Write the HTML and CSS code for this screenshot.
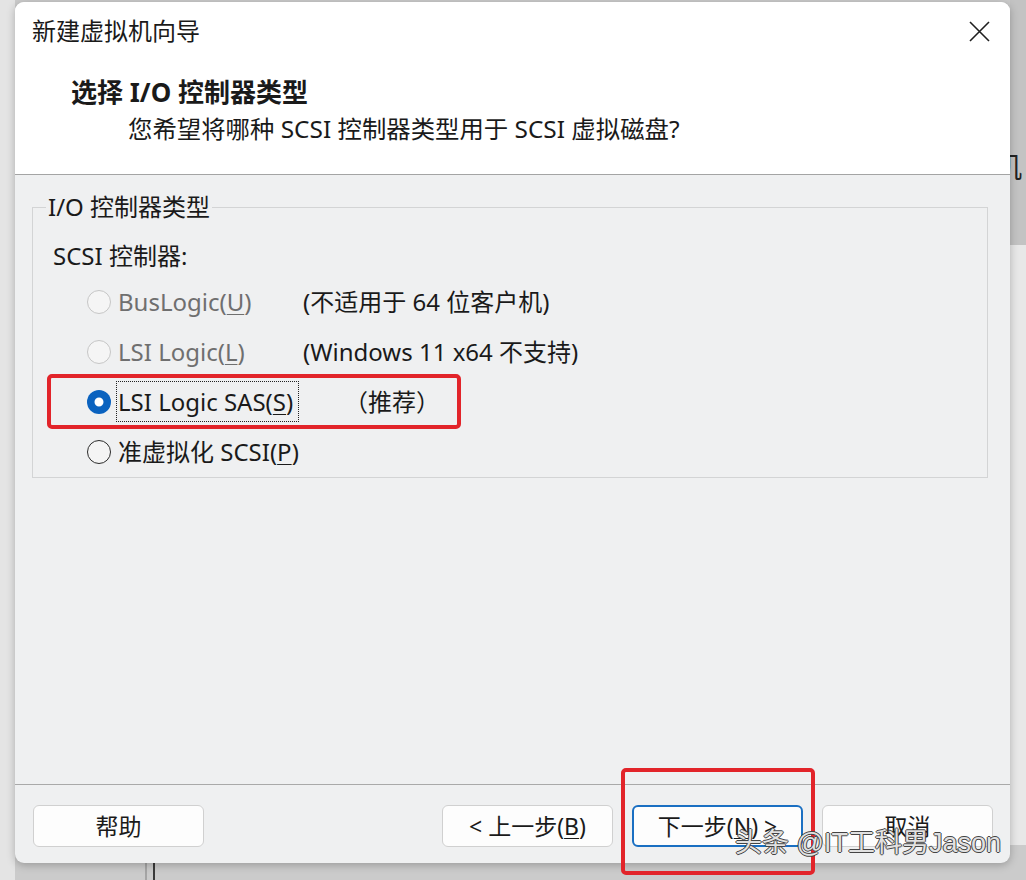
FILE: index.html
```html
<!DOCTYPE html>
<html lang="zh-CN">
<head>
    <meta charset="UTF-8">
    <meta name="viewport" content="width=device-width, initial-scale=1.0">
    <title>新建虚拟机向导</title>
    <link rel="stylesheet" href="styles.css">
</head>
<body>
    <span class="bg-glyph">机</span>
    <div class="dialog">
        <div class="top">
            <div class="titlebar">
                <span class="title">新建虚拟机向导</span>
                <button class="close-button" aria-label="关闭">
                    <svg width="21" height="21" viewBox="0 0 21 21">
                        <path d="M1 1 L20 20 M20 1 L1 20" stroke="#1f1f1f" stroke-width="1.6" fill="none"/>
                    </svg>
                </button>
            </div>
            <div class="header">
                <h1>选择 I/O 控制器类型</h1>
                <p>您希望将哪种 SCSI 控制器类型用于 SCSI 虚拟磁盘?</p>
            </div>
        </div>
        <div class="content">
            <fieldset class="group">
                <legend>I/O 控制器类型</legend>
                <div class="group-label">SCSI 控制器:</div>
                <div class="option disabled">
                    <span class="radio"></span>
                    <span class="option-label">BusLogic(<u>U</u>)</span>
                    <span class="note">(不适用于 64 位客户机)</span>
                </div>
                <div class="option disabled">
                    <span class="radio"></span>
                    <span class="option-label">LSI Logic(<u>L</u>)</span>
                    <span class="note">(Windows 11 x64 不支持)</span>
                </div>
                <div class="option">
                    <span class="radio checked"></span>
                    <span class="option-label"><span class="focus">LSI Logic SAS(<u>S</u>)</span></span>
                    <span class="note recommend">（推荐）</span>
                </div>
                <div class="option">
                    <span class="radio"></span>
                    <span class="option-label">准虚拟化 SCSI(<u>P</u>)</span>
                    <span class="note"></span>
                </div>
            </fieldset>
            <!-- 标注框 -->
            <div class="mark mark-option"></div>
        </div>
        <div class="footer">
            <button class="btn">帮助</button>
            <div class="footer-right">
                <button class="btn">&lt; 上一步(<u>B</u>)</button>
                <button class="btn btn-default">下一步(<u>N</u>) &gt;</button>
                <button class="btn">取消</button>
            </div>
        </div>
    </div>
    <div class="mark mark-next"></div>
    <div class="watermark">头条 @IT工科男Jason</div>
</body>
</html>
```

FILE: styles.css
```css
html, body {
    margin: 0;
    height: 880px;
}
body {
    position: relative;
    overflow: hidden;
    box-sizing: border-box;
    padding: 2px 16px 17px 15px;
    font-family: "Noto Sans", "Noto Sans CJK SC", sans-serif;
    color: #1a1a1a;
    background:
        linear-gradient(#c3c3c3, #c3c3c3) 1010px 0 / 16px 245px no-repeat,
        linear-gradient(#e8e8e8, #e8e8e8) 1010px 245px / 16px 600px no-repeat,
        linear-gradient(#e4e4e4, #e4e4e4) 0 0 / 15px 880px no-repeat,
        linear-gradient(#a5a5a5, #a5a5a5) 145px 863px / 2px 17px no-repeat,
        linear-gradient(#3a3a3a, #3a3a3a) 153px 863px / 2px 17px no-repeat,
        #cbcbcb;
}
.bg-glyph {
    position: absolute;
    left: 994px;
    top: 152px;
    font-family: "Noto Sans CJK SC", sans-serif;
    font-size: 28px;
    line-height: 1;
    color: #222;
}
.dialog {
    position: relative;
    z-index: 1;
    width: 995px;
    height: 861px;
    display: flex;
    flex-direction: column;
    background-color: #eff0f1;
    border-radius: 9px;
    box-shadow: 0 2px 8px rgba(0, 0, 0, 0.25);
    overflow: hidden;
}
.top {
    height: 172px;
    background-color: #fff;
    border-bottom: 1px solid #a4a4a4;
}
.titlebar {
    height: 58px;
    display: flex;
    align-items: center;
    justify-content: space-between;
    padding: 0 20px 0 17px;
}
.title {
    font-size: 24px;
    line-height: 28px;
}
.close-button {
    border: none;
    background: none;
    padding: 0;
    width: 21px;
    height: 21px;
    display: flex;
}
.header {
    padding: 18px 0 0 56px;
}
.header h1 {
    margin: 0;
    font-size: 26px;
    line-height: 28px;
    font-weight: 700;
}
.header p {
    margin: 9px 0 0 57px;
    font-size: 24.4px;
    line-height: 28px;
}
.content {
    position: relative;
    flex: 1;
    padding: 18px 22px 0 17px;
}
.group {
    margin: 0;
    min-width: 0;
    padding: 0 0 0 20px;
    border: 1px solid #d3d4d5;
}
.group legend {
    margin-left: -7px;
    padding: 0 2px;
    font-size: 24px;
    line-height: 28px;
}
.group-label {
    margin: 21px 0 7px;
    font-size: 24px;
    line-height: 28px;
}
.option {
    display: grid;
    grid-template-columns: 31px 185px auto;
    align-items: center;
    height: 50px;
    margin-left: 34px;
    font-size: 24px;
    line-height: 28px;
}
.option-label u, .btn u {
    text-underline-offset: 3px;
    text-decoration-thickness: 1px;
}
.option.disabled .option-label {
    color: #6f6f6f;
}
.radio {
    width: 24px;
    height: 24px;
    box-sizing: border-box;
    border-radius: 50%;
    border: 1.5px solid #2b2b2b;
    background-color: #f4f4f4;
}
.option.disabled .radio {
    border-color: #c6c6c6;
    background-color: #f5f5f5;
}
.radio.checked {
    border: none;
    background-color: #fff;
    box-shadow: inset 0 0 0 7.5px #0a62bf;
}
.focus {
    outline: 1px dotted #222;
    outline-offset: 1px;
    padding: 2px 4px 2px 0;
}
.note.recommend {
    padding-left: 41px;
}
.footer {
    display: flex;
    justify-content: space-between;
    padding: 20px 17px 16px 18px;
    border-top: 1px solid #a9a9a9;
}
.footer-right {
    display: flex;
    gap: 19px;
}
.btn {
    width: 171px;
    height: 42px;
    box-sizing: border-box;
    border: 1px solid #d0d0d0;
    border-radius: 6px;
    background-color: #fdfdfd;
    font-family: "Noto Sans", "Noto Sans CJK SC", sans-serif;
    font-size: 23px;
    line-height: 28px;
    color: #1a1a1a;
    padding: 0;
}
.btn-default {
    border: 2px solid #1a6fc2;
}
.mark {
    position: absolute;
    box-sizing: border-box;
    border: 4px solid #e2242a;
    border-radius: 5px;
}
.mark-option {
    left: 32px;
    top: 199px;
    width: 414px;
    height: 55px;
}
.mark-next {
    z-index: 2;
    left: 621px;
    top: 768px;
    width: 194px;
    height: 107px;
}
.watermark {
    position: absolute;
    z-index: 3;
    left: 735px;
    top: 826px;
    font-family: "Liberation Sans", "Noto Sans CJK SC", sans-serif;
    font-size: 27px;
    line-height: 34px;
    color: rgba(255, 255, 255, 0.85);
    text-shadow: 1px 0 0 #444, -1px 0 0 #444, 0 1px 0 #444, 0 -1px 0 #444;
}
```
